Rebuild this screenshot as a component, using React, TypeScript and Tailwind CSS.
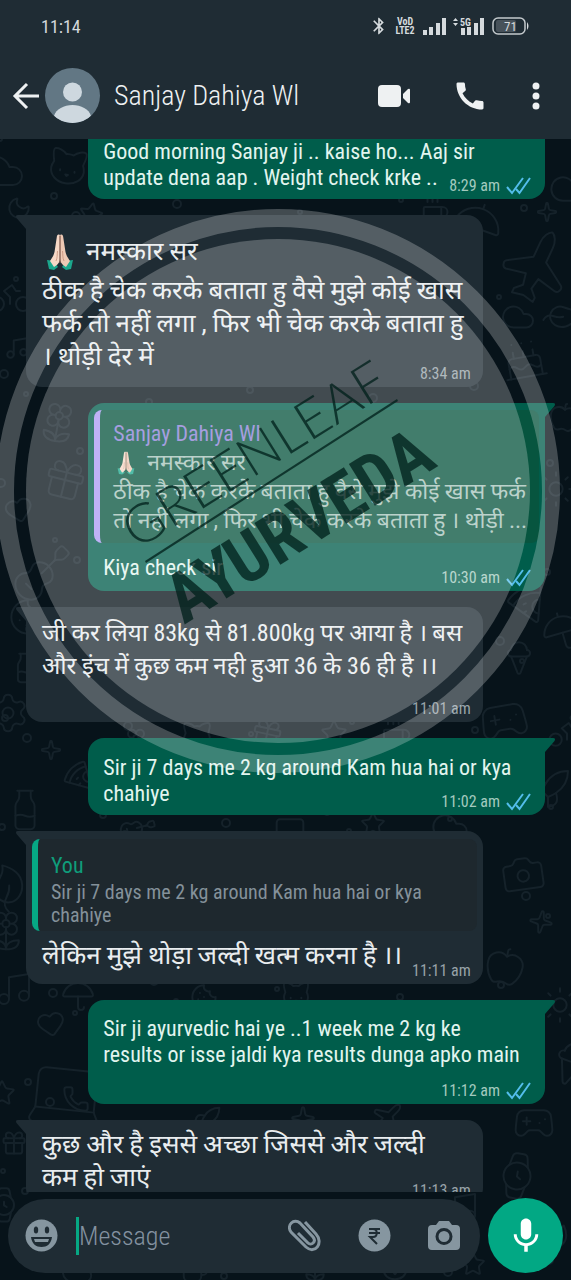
import { ReactNode } from "react";
import {
  Apple, Bike, Cake, Camera, Cat, Cloud, Coffee, Cookie, Flower2, Gamepad2, Gift, Guitar, Heart,
  IceCreamCone, Laptop, Leaf, Milk, Moon, Music, Phone, Pizza, Plane, Rocket, Settings,
  Sparkle, Star, Sun, Umbrella, Watch,
} from "lucide-react";
import { MdBluetooth, MdCall, MdMic } from "react-icons/md";

type Quote = { name: string; mine?: boolean; hands?: boolean; text: string };

type Message = {
  id: number;
  mine?: boolean;
  hands?: boolean;
  text: string;
  time: string;
  quote?: Quote;
  box: string;
  joined?: boolean;
};

const messages: Message[] = [
  {
    id: 1, mine: true, joined: true, time: "8:29 am", box: "text-[22px] pt-4 pb-2 leading-[26px]",
    text: "Good morning Sanjay ji .. kaise ho... Aaj sir\nupdate dena aap . Weight check krke ..",
  },
  {
    id: 2, hands: true, time: "8:34 am", box: "text-[26px] pt-[14px] pb-[14px] leading-[33px]",
    text: "ठीक है चेक करके बताता हु वैसे मुझे कोई खास\nफर्क तो नहीं लगा , फिर भी चेक करके बताता हु\n। थोड़ी देर में",
  },
  {
    id: 3, mine: true, time: "10:30 am", box: "text-[22px] pt-[13px] pb-[10px] leading-[26px]",
    text: "Kiya check sir",
    quote: {
      name: "Sanjay Dahiya Wl", hands: true,
      text: "ठीक है चेक करके बताता हु वैसे मुझे कोई खास फर्क\nतो नहीं लगा , फिर भी चेक करके बताता हु । थोड़ी ...",
    },
  },
  {
    id: 4, time: "11:01 am", box: "text-[24px] pt-[10px] pb-[39px] leading-[33px]",
    text: "जी कर लिया 83kg से 81.800kg पर आया है । बस\nऔर इंच में कुछ कम नही हुआ 36 के 36 ही है ।।",
  },
  {
    id: 5, mine: true, time: "11:02 am", box: "text-[22px] pt-[17px] pb-2 leading-[26px]",
    text: "Sir ji 7 days me 2 kg around Kam hua hai or kya\nchahiye",
  },
  {
    id: 6, time: "11:11 am", box: "text-[26px] pt-2 pb-[12px] leading-[33px]",
    text: "लेकिन मुझे थोड़ा जल्दी खत्म करना है ।।",
    quote: { name: "You", mine: true, text: "Sir ji 7 days me 2 kg around Kam hua hai or kya\nchahiye" },
  },
  {
    id: 7, mine: true, time: "11:12 am", box: "text-[22px] pt-4 pb-9 leading-[26px]",
    text: "Sir ji ayurvedic hai ye ..1 week me 2 kg ke\nresults or isse jaldi kya results dunga apko main",
  },
  {
    id: 8, time: "11:13 am", box: "text-[26px] pt-2 pb-[10px] leading-[33px]",
    text: "कुछ और है इससे अच्छा जिससे और जल्दी\nकम हो जाएं",
  },
];

// wallpaper drawings: icon, x, y, size, rotation
const doodles: [typeof Star, number, number, number, number][] = [
  [Cloud, -22, 8, 48, 0], [Cat, 46, 6, 44, 10], [Star, 78, 62, 26, 12], [Moon, 6, 56, 26, -10],
  [Plane, 496, 92, 78, -20], [Cloud, 548, 30, 40, 0], [Sparkle, 536, 62, 22, 0], [Coffee, 420, 58, 30, 0],
  [Cake, 500, 196, 48, -10], [Leaf, 545, 160, 34, 30], [Umbrella, 450, 60, 54, 20], [Cloud, 500, 160, 36, 0],
  [Bike, -14, 130, 48, 0], [Music, 4, 196, 26, 0], [Flower2, 36, 262, 44, 10], [Gift, 42, 318, 46, 14],
  [Heart, 4, 356, 30, -14], [Guitar, 10, 402, 64, 0], [Apple, 548, 262, 32, 8], [Sun, 536, 330, 40, 0],
  [Cookie, 8, 458, 40, 0], [Pizza, 506, 440, 42, 20], [Umbrella, 540, 470, 44, -16], [Milk, 8, 512, 34, 0],
  [Settings, -14, 552, 44, 0], [Sparkle, 40, 600, 22, 0], [Milk, 2, 648, 46, 0], [Pizza, 62, 620, 32, 0],
  [Gamepad2, 478, 556, 52, -10], [IceCreamCone, 500, 500, 38, 0], [Bike, 546, 570, 42, 0], [Rocket, 524, 628, 48, 0],
  [Gift, 250, 578, 34, 12], [Star, 320, 580, 28, 0], [Cat, 180, 580, 34, 0], [Flower2, 120, 588, 32, 0],
  [Coffee, 380, 580, 32, 0], [Laptop, 270, 672, 40, 0], [Star, 360, 672, 26, 0], [Guitar, 120, 672, 34, 30],
  [Cloud, 430, 668, 40, 0], [Camera, 500, 712, 46, -8], [Sparkle, 528, 770, 26, 10], [Apple, 484, 806, 42, 12],
  [Leaf, -14, 726, 44, -50], [Flower2, -16, 770, 44, 0], [Music, -6, 830, 40, 0],
  [Cookie, 190, 844, 28, 0], [Cat, 280, 840, 32, 0], [Umbrella, 60, 838, 36, 0], [Heart, 36, 870, 30, -10],
  [Star, -12, 940, 28, 0], [Laptop, 22, 912, 88, 6], [Phone, 62, 946, 28, 0], [Sun, 540, 846, 40, 0],
  [IceCreamCone, 546, 900, 50, 20], [Gamepad2, 512, 962, 44, 0], [Rocket, 190, 966, 32, 0],
  [Sparkle, 290, 966, 26, 0], [Plane, 370, 962, 34, 0], [Watch, -16, 1046, 40, 0], [Gift, 0, 990, 28, 0],
  [Watch, 490, 1010, 54, 10], [Music, 440, 1050, 40, 0], [Flower2, 300, 1114, 30, 0], [Star, 460, 1112, 26, 0],
  [Cloud, 60, 1116, 34, 0], [Coffee, 180, 1116, 30, 0], [Cat, 380, 1114, 30, 0], [Leaf, 540, 1084, 30, 0],
];

const dots = Array.from({ length: 130 }, (_, i) => ({
  x: (i * 149) % 571,
  y: (i * 263) % 1141,
  r: 2 + (i % 3),
}));

const Wallpaper = () => (
  <svg
    className="absolute inset-0 h-full w-full"
    viewBox="0 0 571 1141"
    preserveAspectRatio="xMidYMin slice"
    fill="none"
    stroke="#15222a"
    strokeWidth="2"
    aria-hidden="true"
  >
    {dots.map((d, i) => <circle key={i} cx={d.x} cy={d.y} r={d.r} />)}
    {doodles.map(([Icon, x, y, size, turn], i) => (
      <g key={i} transform={`rotate(${turn} ${x + size / 2} ${y + size / 2})`}>
        <Icon x={x} y={y} size={size} color="#15222a" strokeWidth={2} absoluteStrokeWidth />
      </g>
    ))}
  </svg>
);

const Watermark = () => (
  <svg
    className="pointer-events-none absolute top-[70px] left-1/2 h-[564px] w-[582px] max-w-none -translate-x-1/2"
    viewBox="0 0 582 564"
  >
    <g fill="#fff" fillOpacity="0.24">
      <circle cx="283" cy="282" r="252" />
      <circle cx="283" cy="282" r="273" fill="none" stroke="#fff" strokeOpacity="0.24" strokeWidth="18" />
    </g>
    <g fill="#001f1a" fillOpacity="0.76">
      <text
        transform="translate(142 341) rotate(-32)"
        className="font-['Lato',sans-serif] text-[54px] font-light"
      >
        GREENLEAF
      </text>
      <path d="M150 352 L402 190 L403 192 L151 354 Z" />
      <text
        transform="translate(189 416) rotate(-32)"
        className="font-['Roboto_Condensed','Lato',sans-serif] text-[69px] font-bold"
      >
        AYURVEDA
      </text>
    </g>
  </svg>
);

const Hands = ({ className }: { className: string }) => (
  <svg className={className} viewBox="0 0 28 36" role="img" aria-label="folded hands">
    <path d="M1 26 L8 27 L12 33 L8 36 L3 35 Z" fill="#1ba88d" />
    <path d="M27 26 L20 27 L16 33 L20 36 L25 35 Z" fill="#1ba88d" />
    <path d="M13.800 1 C12 0 11 1 10.800 3 L8.500 18 C7.800 22 5 25 4 27 L8 33 C11 31 13.800 29 13.800 25 Z" fill="#f6d8c6" />
    <path d="M14.200 1 C16 0 17 1 17.200 3 L19.500 18 C20.200 22 23 25 24 27 L20 33 C17 31 14.200 29 14.200 25 Z" fill="#eec9b4" />
    <path d="M14 2 V29" stroke="#8a5a48" strokeWidth="1" />
    <path d="M11.500 17 C11 21 11.500 24 10 27 M16.500 17 C17 21 16.500 24 18 27" stroke="#c58f78" strokeWidth="0.8" fill="none" />
  </svg>
);

const Ticks = () => (
  <svg className="h-[18px] w-[25px]" viewBox="0 0 25 18" fill="none" stroke="#53bdeb" strokeWidth="2" aria-label="read">
    <path d="M1 10 L6 16 L17 1" />
    <path d="M10 12 L13.500 16 L24 1" />
  </svg>
);

const QuoteBox = ({ quote }: { quote: Quote }) => (
  <blockquote
    className={
      quote.mine
        ? "mr-[2px] -ml-[10px] rounded-lg border-l-[6px] border-[#06a884] bg-[#1e282e] pt-3 pb-1 pl-[13px] text-[20px] leading-[23px] text-[#84919a]"
        : "-mt-[6px] -mr-[9px] -ml-[9px] rounded-lg border-l-[6px] border-[#ab9af5] bg-[#07553f] pt-[10px] pb-2 pl-[13px] text-[23px] leading-[29px] text-[#a6c4bb]"
    }
  >
    <cite
      className={
        quote.mine
          ? "block text-[22px] leading-[30px] not-italic text-[#0f9d7b]"
          : "block text-[22px] leading-[28px] not-italic text-[#8a80d6]"
      }
    >
      {quote.name}
    </cite>
    {quote.hands && (
      <p className="flex items-center gap-3">
        <Hands className="ml-1 h-6 w-[18px]" />नमस्कार सर
      </p>
    )}
    <p className="whitespace-pre-line">{quote.text}</p>
  </blockquote>
);

const Bubble = ({ message }: { message: Message }) => {
  const { mine, joined, quote, hands, text, time, box } = message;
  return (
    <article
      className={
        mine
          ? "relative w-[88%] self-end rounded-2xl bg-[#005d4b] px-[15px] text-[#e2f5ef] " + (joined ? "" : "rounded-tr-none ") + box
          : "relative w-[88%] self-start rounded-2xl rounded-tl-none bg-[#1f2c34] pr-1 pl-4 text-[#e9edef] " + box
      }
    >
      {!joined && (
        <svg
          className={mine ? "absolute top-0 -right-[10px] h-4 w-[11px]" : "absolute top-0 -left-[10px] h-4 w-[11px] -scale-x-100"}
          viewBox="0 0 11 16"
          aria-hidden="true"
        >
          <path d="M0 0 H9 Q12 0 10.500 3 L1 14 V16 H0 Z" fill={mine ? "#005d4b" : "#1f2c34"} />
        </svg>
      )}
      {quote && <QuoteBox quote={quote} />}
      {hands && (
        <p className="flex h-[45px] items-center gap-3">
          <Hands className="ml-1 h-9 w-7" />नमस्कार सर
        </p>
      )}
      <p className={quote && mine ? "mt-3 whitespace-pre-line" : quote ? "mt-2 whitespace-pre-line" : "whitespace-pre-line"}>{text}</p>
      <footer
        className={
          mine
            ? "absolute right-[14px] bottom-[3px] flex items-center gap-[6px] text-[16px] leading-5 text-[#a3cabf]"
            : "absolute right-3 bottom-[3px] text-[16px] leading-5 text-[#98a3a9]"
        }
      >
        <time>{time}</time>
        {mine && <Ticks />}
      </footer>
    </article>
  );
};

const StatusBar = () => (
  <div className="flex h-[52px] items-center justify-between pr-[41px] pl-[41px] text-[#d5dadd]">
    <time className="text-[18px]">11:14</time>
    <div className="flex items-center">
      <MdBluetooth size={20} />
      <div className="ml-[6px] w-5 text-center text-[10px] leading-[9px] font-bold">
        <div>VoD</div>
        <div>LTE2</div>
      </div>
      <svg className="ml-2 h-5 w-[107px]" viewBox="0 0 107 20" fill="#d5dadd" role="img" aria-label="signal and battery">
        <path d="M0 14h4v5h-4zM6 11h4v8h-4zM13 7h4v12h-4zM19 2h4v17h-4z" />
        <path d="M30 5l2.500-3 2.500 3zM30 7l2.500 3 2.500-3z" />
        <text x="37" y="10" fontSize="10" fontWeight="bold">5G</text>
        <path d="M38 12h4v7h-4zM44 11h4v8h-4zM51 7h4v12h-4zM57 2h4v17h-4z" />
        <rect x="70" y="2" width="32" height="16" rx="5" fill="none" stroke="#c3c9cc" strokeWidth="1.500" />
        <rect x="73" y="4" width="20" height="12" rx="2" fill="#47525a" />
        <path d="M104 6 q3 4 0 8z" />
        <text x="81" y="15" fontSize="13">71</text>
      </svg>
    </div>
  </div>
);

const IconButton = ({ label, children }: { label: string; children: ReactNode }) => (
  <button type="button" aria-label={label} className="flex items-center justify-center">{children}</button>
);

const Header = () => (
  <header className="shrink-0 bg-[#1f2c34]">
    <StatusBar />
    <div className="flex h-[87px] items-center pr-[26px] pl-[11px] text-[#eef1f2]">
      <IconButton label="Back">
        <svg className="h-8 w-[30px]" viewBox="0 0 30 32" fill="none" stroke="currentColor" strokeWidth="3">
          <path d="M16 4 L4 16 L16 28 M4 16 H28" />
        </svg>
      </IconButton>
      <svg className="ml-1 h-[55px] w-[55px] rounded-full bg-[#627784]" viewBox="0 0 55 55" fill="#ced8df" role="img" aria-label="Sanjay Dahiya Wl">
        <circle cx="27.500" cy="24" r="9.500" />
        <path d="M9 48 C11 41 19 37 27.500 37 C36 37 44 41 46 48 C42 53 35 55 27.500 55 C20 55 13 53 9 48 Z" />
      </svg>
      <h1 className="ml-[14px] flex-1 text-[28px] leading-9 font-light">Sanjay Dahiya Wl</h1>
      <div className="flex items-center">
        <IconButton label="Video call">
          <svg className="h-6 w-8" viewBox="0 0 32 24" fill="currentColor">
            <rect width="23" height="22" y="1" rx="4" />
            <path d="M25 10 L30 5 Q32 4 32 6 V18 Q32 20 30 19 L25 14 Z" />
          </svg>
        </IconButton>
        <div className="ml-[42px] flex"><IconButton label="Call"><MdCall size={36} /></IconButton></div>
        <div className="ml-[39px] flex">
          <IconButton label="More">
            <svg className="h-8 w-[18px]" viewBox="0 0 18 32" fill="currentColor">
              <circle cx="9" cy="6" r="3.500" /><circle cx="9" cy="16" r="3.500" /><circle cx="9" cy="26" r="3.500" />
            </svg>
          </IconButton>
        </div>
      </div>
    </div>
  </header>
);

const Composer = () => (
  <form className="relative flex shrink-0 items-center gap-2 px-2 pt-[6px] pb-[7px]">
    <div className="flex h-[74px] min-w-0 flex-1 items-center rounded-full bg-[#1f2c34] pr-5 pl-[17px] text-[#8696a0]">
      <IconButton label="Emoji">
        <svg className="h-[33px] w-[33px]" viewBox="0 0 33 33" fill="#8696a0">
          <circle cx="16.500" cy="16.500" r="16" />
          <ellipse cx="11" cy="11" rx="2.200" ry="3.500" fill="#1f2c34" />
          <ellipse cx="22" cy="11" rx="2.200" ry="3.500" fill="#1f2c34" />
          <path d="M6 18 H27 C26 25 22 28 16.500 28 C11 28 7 25 6 18 Z" fill="#1f2c34" />
          <path d="M9 20 H24 L23 23 H10 Z" />
        </svg>
      </IconButton>
      <span className="ml-[18px] h-[38px] w-[3px] shrink-0 bg-[#06a884]" />
      <input
        aria-label="Message"
        placeholder="Message"
        className="h-10 min-w-0 flex-1 bg-transparent text-[26px] font-light outline-none placeholder:text-[#8492a0]"
      />
      <div className="flex shrink-0 items-center gap-[37px]">
        <IconButton label="Attach">
          <svg className="h-[33px] w-[33px]" viewBox="0 0 33 33" fill="none" stroke="#8696a0" strokeWidth="3">
            <path d="M17 3 L28 15 C36 24 27 36 18 28 L3 13 C-2 6 6 -1 12 4 L25 18 C29 23 23 27 20 24 L10 14" />
          </svg>
        </IconButton>
        <IconButton label="Pay">
          <svg className="h-[33px] w-[33px]" viewBox="0 0 33 33" fill="none" stroke="#1f2c34" strokeWidth="2">
            <circle cx="16.500" cy="16.500" r="16" fill="#8696a0" stroke="none" />
            <path d="M11 10 H22 M11 14 H22 M11 10 H15 C20 10 20 18 15 18 H12 L19 25" />
          </svg>
        </IconButton>
        <IconButton label="Camera">
          <svg className="h-[33px] w-[32px]" viewBox="0 0 32 33" fill="#8696a0">
            <path d="M11 2 H21 L24 6 H28 Q32 6 32 10 V27 Q32 31 28 31 H4 Q0 31 0 27 V10 Q0 6 4 6 H8 Z" />
            <circle cx="16" cy="17.500" r="7" fill="none" stroke="#1f2c34" strokeWidth="3" />
          </svg>
        </IconButton>
      </div>
    </div>
    <button type="button" aria-label="Record" className="flex h-[75px] w-[75px] shrink-0 items-center justify-center rounded-full bg-[#02a884] text-white">
      <MdMic size={42} />
    </button>
  </form>
);

const App = () => (
  <div className="flex h-screen flex-col bg-[#07131a] font-['Roboto_Condensed','Lato','Noto_Sans',sans-serif]">
    <Header />
    <main className="relative flex min-h-0 flex-1 flex-col overflow-hidden">
      <Wallpaper />
      <section className="relative min-h-0 flex-1 overflow-hidden">
        <div className="-mt-4 flex flex-col gap-4 px-[26px]">
          {messages.map((m) => <Bubble key={m.id} message={m} />)}
        </div>
        <Watermark />
      </section>
      <Composer />
    </main>
  </div>
);

export default App;
